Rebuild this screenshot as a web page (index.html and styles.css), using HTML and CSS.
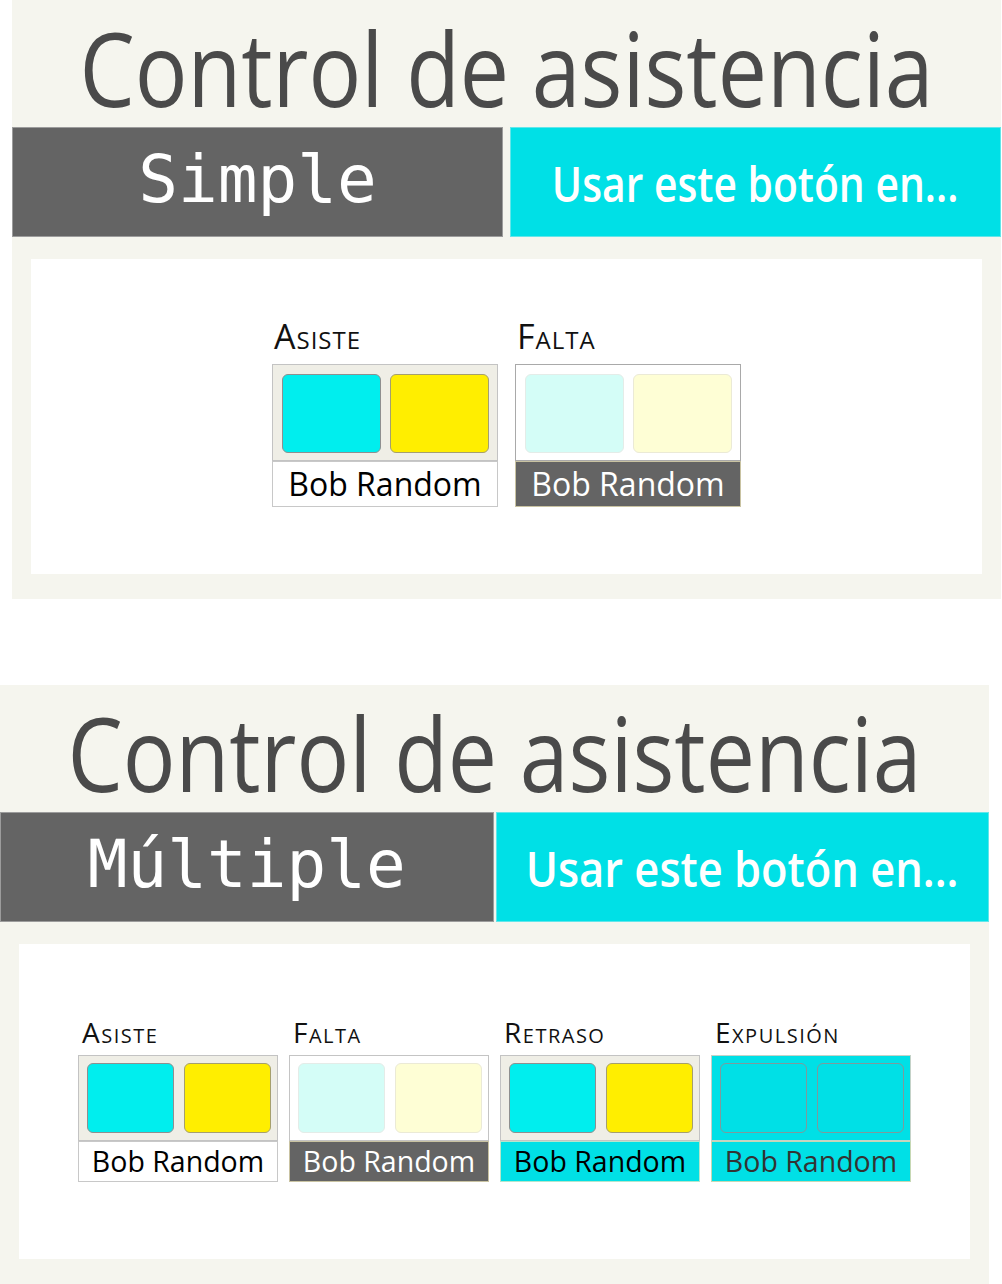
FILE: index.html
```html
<!DOCTYPE html>
<html lang="es">
<head>
<meta charset="utf-8">
<title>Control de asistencia</title>
<link rel="stylesheet" href="styles.css">
</head>
<body>
<div class="page">
  <section class="panel panel--simple">
    <h1 class="title"><span class="title-text">Control de asistencia</span></h1>
    <div class="header header--simple">
      <div class="mode">Simple</div>
      <div class="use-btn"><span class="use-text">Usar este botón en...</span></div>
    </div>
    <div class="stage stage--simple">
      <div class="card card--lg card--asiste">
        <div class="label">Asiste</div>
        <div class="keys"><span class="key key--a"></span><span class="key key--b"></span></div>
        <div class="name">Bob Random</div>
      </div>
      <div class="card card--lg card--falta">
        <div class="label">Falta</div>
        <div class="keys"><span class="key key--a"></span><span class="key key--b"></span></div>
        <div class="name">Bob Random</div>
      </div>
    </div>
  </section>

  <section class="panel panel--multi">
    <h1 class="title"><span class="title-text">Control de asistencia</span></h1>
    <div class="header header--multi">
      <div class="mode">Múltiple</div>
      <div class="use-btn"><span class="use-text">Usar este botón en...</span></div>
    </div>
    <div class="stage stage--multi">
      <div class="card card--sm card--asiste">
        <div class="label">Asiste</div>
        <div class="keys"><span class="key key--a"></span><span class="key key--b"></span></div>
        <div class="name">Bob Random</div>
      </div>
      <div class="card card--sm card--falta">
        <div class="label">Falta</div>
        <div class="keys"><span class="key key--a"></span><span class="key key--b"></span></div>
        <div class="name">Bob Random</div>
      </div>
      <div class="card card--sm card--retraso">
        <div class="label">Retraso</div>
        <div class="keys"><span class="key key--a"></span><span class="key key--b"></span></div>
        <div class="name">Bob Random</div>
      </div>
      <div class="card card--sm card--expulsion">
        <div class="label">Expulsión</div>
        <div class="keys"><span class="key key--a"></span><span class="key key--b"></span></div>
        <div class="name">Bob Random</div>
      </div>
    </div>
  </section>
</div>
</body>
</html>
```

FILE: styles.css
```css
* { box-sizing: border-box; }

body {
  margin: 0;
  background: #ffffff;
  font-family: "Open Sans", "Noto Sans", sans-serif;
}

.page {
  display: flex;
  flex-direction: column;
  width: 1002px;
}

.panel {
  width: 989px;
  height: 599px;
  background: #f5f5ee;
  display: flex;
  flex-direction: column;
}

.panel--simple { margin-left: 12px; }
.panel--multi { margin-top: 86px; }

.title {
  margin: 0 0 -8px;
  height: 135px;
  display: flex;
  justify-content: center;
  font-size: 102px;
  line-height: 135px;
  font-weight: 400;
  color: #4a4a4a;
  white-space: nowrap;
}

.title-text {
  display: inline-block;
  transform: scaleX(0.86);
}

.header {
  position: relative;
  display: flex;
  height: 110px;
}
.header--simple { gap: 7px; }
.header--multi { gap: 2px; }

.mode {
  flex: 1 1 0;
  background: #646464;
  border: 1px solid #9c9c9c;
  color: #ffffff;
  font-family: "DejaVu Sans Mono", "Liberation Mono", monospace;
  font-size: 66px;
  display: flex;
  align-items: center;
  justify-content: center;
  padding-bottom: 6px;
}

.use-btn {
  flex: 1 1 0;
  background: #00e0e6;
  border: 1px solid #62e6ea;
  color: #ffffff;
  font-size: 48px;
  font-weight: 600;
  display: flex;
  align-items: center;
  justify-content: center;
  padding-top: 2px;
  white-space: nowrap;
}

.use-text {
  display: inline-block;
  transform: scaleX(0.85);
}
.header--multi .use-text { transform: scaleX(0.905); }

.stage {
  margin: 22px 19px 25px;
  flex: 1 1 auto;
  background: #ffffff;
  display: flex;
  justify-content: center;
  align-items: flex-start;
}
.stage--simple { gap: 17px; padding-top: 57px; }
.stage--multi { gap: 11px; padding-top: 72px; }

.card {
  display: flex;
  flex-direction: column;
}
.card--lg { width: 226px; }
.card--sm { width: 200px; }

.label {
  font-variant: small-caps;
  color: #111111;
  padding-left: 2px;
  letter-spacing: 1px;
  white-space: nowrap;
}
.card--lg .label { font-size: 34px; line-height: 40px; margin-bottom: 8px; }
.card--sm .label { font-size: 28px; line-height: 32px; margin-bottom: 7px; letter-spacing: 1.5px; padding-left: 4px; }

.keys {
  display: flex;
  justify-content: space-between;
  border: 1px solid #c3c3c3;
  background: #efeee6;
}
.card--lg .keys { height: 97px; padding: 9px 8px 7px 9px; }
.card--sm .keys { height: 86px; padding: 7px 6px 7px 8px; }

.key {
  display: block;
  border-radius: 6px;
  border: 1px solid #8f8f8f;
}
.card--lg .key { width: 99px; height: 79px; }
.card--sm .key { width: 87px; height: 70px; }

.key--a { background: #00eeee; }
.key--b { background: #ffee00; border-color: #a59f6e; }

.name {
  text-align: center;
  white-space: nowrap;
  background: #ffffff;
  border: 1px solid #c8c8c8;
  color: #000000;
}
.card--lg .name { height: 46px; font-size: 32px; line-height: 44px; }
.card--sm .name { height: 41px; font-size: 28.5px; line-height: 38px; }

/* Falta */
.card--falta .keys { background: #ffffff; border-color: #a9a9a9; }
.card--sm.card--falta .keys { border-color: #c4c4c4; }
.card--falta .key--a { background: #d4fdf7; border-color: #e4ece8; }
.card--falta .key--b { background: #fefed5; border-color: #ebead6; }
.card--falta .name { background: #646464; border-color: #c9c3a2; color: #ffffff; }

/* Retraso */
.card--retraso .name { background: #00e0e6; border-color: #b4e6cc; color: #000000; }

/* Expulsión */
.card--expulsion .keys { background: #00e0e6; border-color: #c4d2c8; }
.card--expulsion .key { background: transparent; border-color: #7e9a9c; }
.card--expulsion .name { background: #00e0e6; border-color: #c6d8b4; color: #333333; }
```
